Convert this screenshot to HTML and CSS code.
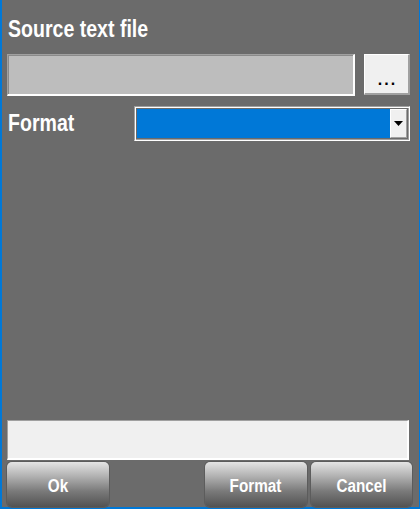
FILE: index.html
```html
<!DOCTYPE html>
<html>
<head>
<meta charset="utf-8">
<link rel="stylesheet" href="styles.css">
</head>
<body>
<div class="window">
  <div class="title"><span class="narrow">Source text file</span></div>
  <div class="file-row">
    <div class="file-input"></div>
    <div class="browse-btn">...</div>
  </div>
  <div class="format-row">
    <div class="label"><span class="narrow">Format</span></div>
    <div class="combo">
      <div class="combo-value"></div>
      <div class="combo-btn">
        <svg width="9" height="5" viewBox="0 0 9 5"><path d="M0 0H9L4.5 5Z" fill="#000"/></svg>
      </div>
    </div>
  </div>
  <div class="spacer"></div>
  <div class="status"></div>
  <div class="buttons">
    <div class="btn"><span class="narrow-c">Ok</span></div>
    <div class="btn-gap"></div>
    <div class="btn"><span class="narrow-c">Format</span></div>
    <div class="btn"><span class="narrow-c">Cancel</span></div>
  </div>
</div>
</body>
</html>
```

FILE: styles.css
```css
html, body {
  margin: 0;
  padding: 0;
}
body {
  width: 420px;
  height: 509px;
  background: #6b6b6b;
  font-family: "Liberation Sans", Arial, sans-serif;
  font-weight: bold;
  color: #fff;
}
.window {
  box-sizing: border-box;
  width: 420px;
  height: 509px;
  border-left: 2px solid #0078d7;
  border-right: 1px solid #0078d7;
  border-bottom: 2px solid #0078d7;
  padding: 0 0 0 5px;
  display: flex;
  flex-direction: column;
}
.narrow {
  display: inline-block;
  transform: scaleX(0.85);
  transform-origin: left center;
}
.narrow-c {
  display: inline-block;
  transform: scaleX(0.85);
  transform-origin: center center;
}
.title {
  font-size: 23px;
  line-height: 28px;
  margin-top: 15px;
  padding-left: 1px;
  white-space: nowrap;
}
.file-row {
  display: flex;
  margin-top: 11px;
  height: 42px;
}
.file-input {
  box-sizing: border-box;
  width: 348px;
  height: 42px;
  background: #bdbdbd;
  border-top: 1px solid #a0a0a0;
  border-left: 1px solid #a0a0a0;
  border-right: 2px solid #fff;
  border-bottom: 2px solid #fff;
  box-shadow: inset 1px 1px 0 #8a8a8a;
}
.browse-btn {
  box-sizing: border-box;
  margin-left: 9px;
  width: 46px;
  height: 41px;
  background: #f0f0f0;
  border-top: 1px solid #fff;
  border-left: 1px solid #fff;
  border-right: 2px solid #a0a0a0;
  border-bottom: 2px solid #a0a0a0;
  color: #000;
  font-family: "Liberation Sans", Arial, sans-serif;
  font-weight: bold;
  font-size: 16px;
  letter-spacing: 2px;
  text-indent: 2px;
  text-align: center;
  line-height: 50px;
}
.format-row {
  display: flex;
  align-items: center;
  margin-top: 10px;
  height: 35px;
}
.label {
  font-size: 23px;
  width: 126px;
  padding-left: 1px;
}
.combo {
  box-sizing: border-box;
  display: flex;
  width: 276px;
  height: 35px;
  border: 1px solid #a0a0a0;
  border-right-color: #fff;
  border-bottom-color: #fff;
  padding: 2px;
  box-shadow: inset 1px 1px 0 #fff, inset -1px -1px 0 #a0a0a0;
}
.combo-value {
  flex: 1;
  background: #0078d7;
}
.combo-btn {
  box-sizing: border-box;
  width: 17px;
  background: #f0f0f0;
  border-left: 1px solid #fff;
  border-top: 1px solid #fff;
  border-right: 1px solid #a0a0a0;
  border-bottom: 1px solid #a0a0a0;
  display: flex;
  align-items: center;
  justify-content: center;
}
.spacer {
  flex: 1;
}
.status {
  box-sizing: border-box;
  width: 402px;
  height: 40px;
  background: #f0f0f0;
  border-top: 1px solid #a0a0a0;
  border-left: 1px solid #a0a0a0;
  border-right: 2px solid #fff;
  border-bottom: 2px solid #fff;
}
.buttons {
  display: flex;
  margin-top: 2px;
  height: 45px;
}
.btn {
  box-sizing: border-box;
  width: 102px;
  height: 45px;
  border-radius: 5px;
  background: linear-gradient(to bottom, #e4e4e4 0%, #b4b4b4 30%, #7a7a7a 65%, #525252 100%);
  color: #fff;
  font-size: 18px;
  text-align: center;
  line-height: 48px;
  margin-right: 4px;
  box-shadow: 0 0 0 1px #5c5c5c;
  white-space: nowrap;
}
.btn:last-child {
  width: 101px;
  margin-right: 0;
}
.btn-gap {
  width: 92px;
}
```
